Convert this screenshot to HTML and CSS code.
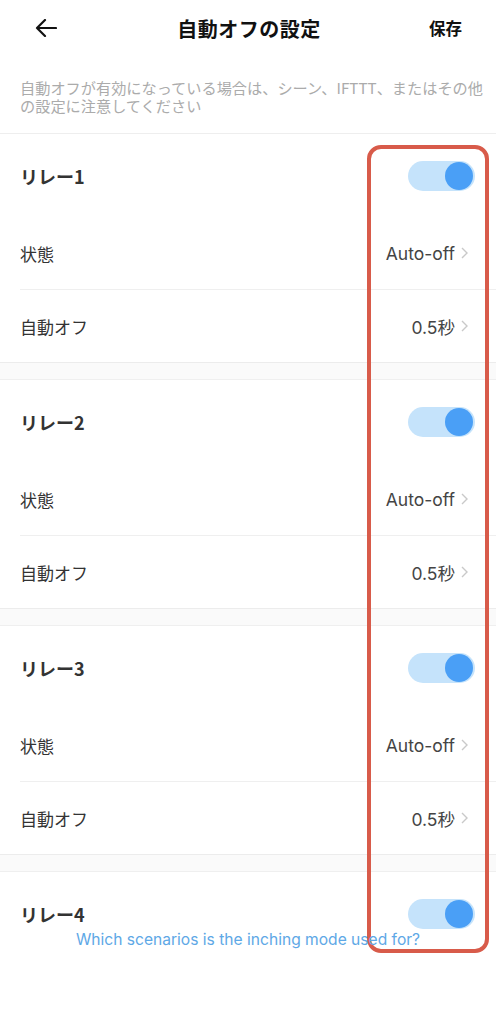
FILE: index.html
```html
<!DOCTYPE html>
<html lang="ja">

<head>
    <meta charset="UTF-8">
    <meta name="viewport" content="width=device-width, initial-scale=1.0">
    <title>自動オフの設定</title>
    <link rel="stylesheet" href="styles.css">
</head>

<body>
    <header class="topbar">
        <button class="back" type="button" aria-label="戻る">
            <svg width="22" height="18" viewBox="0 0 22 18">
                <path d="M21 9H2M10 1L2 9l8 8" fill="none" stroke="#111" stroke-width="2.2" stroke-linecap="round" stroke-linejoin="round" />
            </svg>
        </button>
        <h1>自動オフの設定</h1>
        <button class="save" type="button">保存</button>
    </header>

    <p class="notice">自動オフが有効になっている場合は、シーン、IFTTT、またはその他の設定に注意してください</p>

    <main class="relayList">
        <section class="relay">
            <div class="relayHead">
                <span class="relayName">リレー1</span>
                <span class="toggle on"><span class="knob"></span></span>
            </div>
            <div class="row">
                <span class="label">状態</span>
                <span class="value">Auto-off<svg class="chev" width="7" height="12" viewBox="0 0 7 12"><path d="M1 1l5 5-5 5" fill="none" stroke="#c9c9c9" stroke-width="1.4" /></svg></span>
            </div>
            <div class="row">
                <span class="label">自動オフ</span>
                <span class="value">0.5秒<svg class="chev" width="7" height="12" viewBox="0 0 7 12"><path d="M1 1l5 5-5 5" fill="none" stroke="#c9c9c9" stroke-width="1.4" /></svg></span>
            </div>
        </section>

        <section class="relay">
            <div class="relayHead">
                <span class="relayName">リレー2</span>
                <span class="toggle on"><span class="knob"></span></span>
            </div>
            <div class="row">
                <span class="label">状態</span>
                <span class="value">Auto-off<svg class="chev" width="7" height="12" viewBox="0 0 7 12"><path d="M1 1l5 5-5 5" fill="none" stroke="#c9c9c9" stroke-width="1.4" /></svg></span>
            </div>
            <div class="row">
                <span class="label">自動オフ</span>
                <span class="value">0.5秒<svg class="chev" width="7" height="12" viewBox="0 0 7 12"><path d="M1 1l5 5-5 5" fill="none" stroke="#c9c9c9" stroke-width="1.4" /></svg></span>
            </div>
        </section>

        <section class="relay">
            <div class="relayHead">
                <span class="relayName">リレー3</span>
                <span class="toggle on"><span class="knob"></span></span>
            </div>
            <div class="row">
                <span class="label">状態</span>
                <span class="value">Auto-off<svg class="chev" width="7" height="12" viewBox="0 0 7 12"><path d="M1 1l5 5-5 5" fill="none" stroke="#c9c9c9" stroke-width="1.4" /></svg></span>
            </div>
            <div class="row">
                <span class="label">自動オフ</span>
                <span class="value">0.5秒<svg class="chev" width="7" height="12" viewBox="0 0 7 12"><path d="M1 1l5 5-5 5" fill="none" stroke="#c9c9c9" stroke-width="1.4" /></svg></span>
            </div>
        </section>

        <section class="relay last">
            <div class="relayHead">
                <span class="relayName">リレー4</span>
                <span class="toggle on"><span class="knob"></span></span>
            </div>
        </section>
    </main>

    <a class="helpLink" href="#">Which scenarios is the inching mode used for?</a>

    <div class="highlight"></div>
</body>

</html>
```

FILE: styles.css
```css
body {
    margin: 0;
    padding: 0;
    font-family: 'Noto Sans CJK JP', sans-serif;
    color: #333333;
    background: #ffffff;
    position: relative;
    min-height: 1024px;
}

button {
    font-family: inherit;
    background: transparent;
    border: 0;
    padding: 0;
    cursor: pointer;
}

/* top bar */
.topbar {
    height: 56px;
    display: flex;
    align-items: center;
    justify-content: space-between;
    padding: 0 34px 0 35px;
}

.topbar h1 {
    margin: 0;
    font-size: 20px;
    font-weight: bold;
    color: #111111;
    letter-spacing: 0.5px;
}

.back {
    display: flex;
    width: 34px;
}

.save {
    font-size: 16.5px;
    font-weight: bold;
    color: #111111;
}

.notice {
    margin: 0;
    padding: 22px 10px 19px 20px;
    font-size: 15.2px;
    line-height: 18px;
    color: #ababab;
    border-bottom: 1px solid #eeeeee;
}

/* relay sections */
.relayList {
    background: #fafafa;
}

.relay {
    background: #ffffff;
    border-bottom: 1px solid #ececec;
    margin-bottom: 16px;
}

.relay + .relay {
    border-top: 1px solid #efefef;
}

.relay.last {
    border-bottom: 0;
    margin-bottom: 0;
}

.relayHead {
    height: 83px;
    display: flex;
    align-items: center;
    justify-content: space-between;
    padding: 0 21px 0 20px;
}

.relayName {
    font-size: 18px;
    font-weight: bold;
    color: #333333;
}

.toggle {
    width: 67px;
    height: 30px;
    border-radius: 15px;
    background: #c5e3fb;
    display: flex;
    align-items: center;
    justify-content: flex-end;
    padding: 0 2px;
    box-sizing: border-box;
}

.knob {
    width: 28px;
    height: 28px;
    border-radius: 50%;
    background: #4a9ff6;
}

.row {
    height: 72px;
    display: flex;
    align-items: center;
    justify-content: space-between;
    margin-left: 20px;
    padding-right: 28px;
    font-size: 17px;
}

.row + .row {
    border-top: 1px solid #efefef;
}

.label {
    color: #333333;
}

.value {
    display: flex;
    align-items: center;
    font-family: 'Inter', 'Noto Sans CJK JP', sans-serif;
    font-size: 17.5px;
    color: #444444;
}

.chev {
    margin-left: 6px;
}

/* floating help link */
.helpLink {
    position: absolute;
    top: 930px;
    left: 0;
    right: 0;
    text-align: center;
    font-family: 'Inter', 'Noto Sans CJK JP', sans-serif;
    font-size: 15.6px;
    color: #5ea8e6;
    text-decoration: none;
    z-index: 2;
}

/* annotation box over the toggles */
.highlight {
    position: absolute;
    left: 367px;
    top: 145px;
    width: 122px;
    height: 808px;
    box-sizing: border-box;
    border: 4px solid #d85b4a;
    border-radius: 14px;
    z-index: 1;
}
```
